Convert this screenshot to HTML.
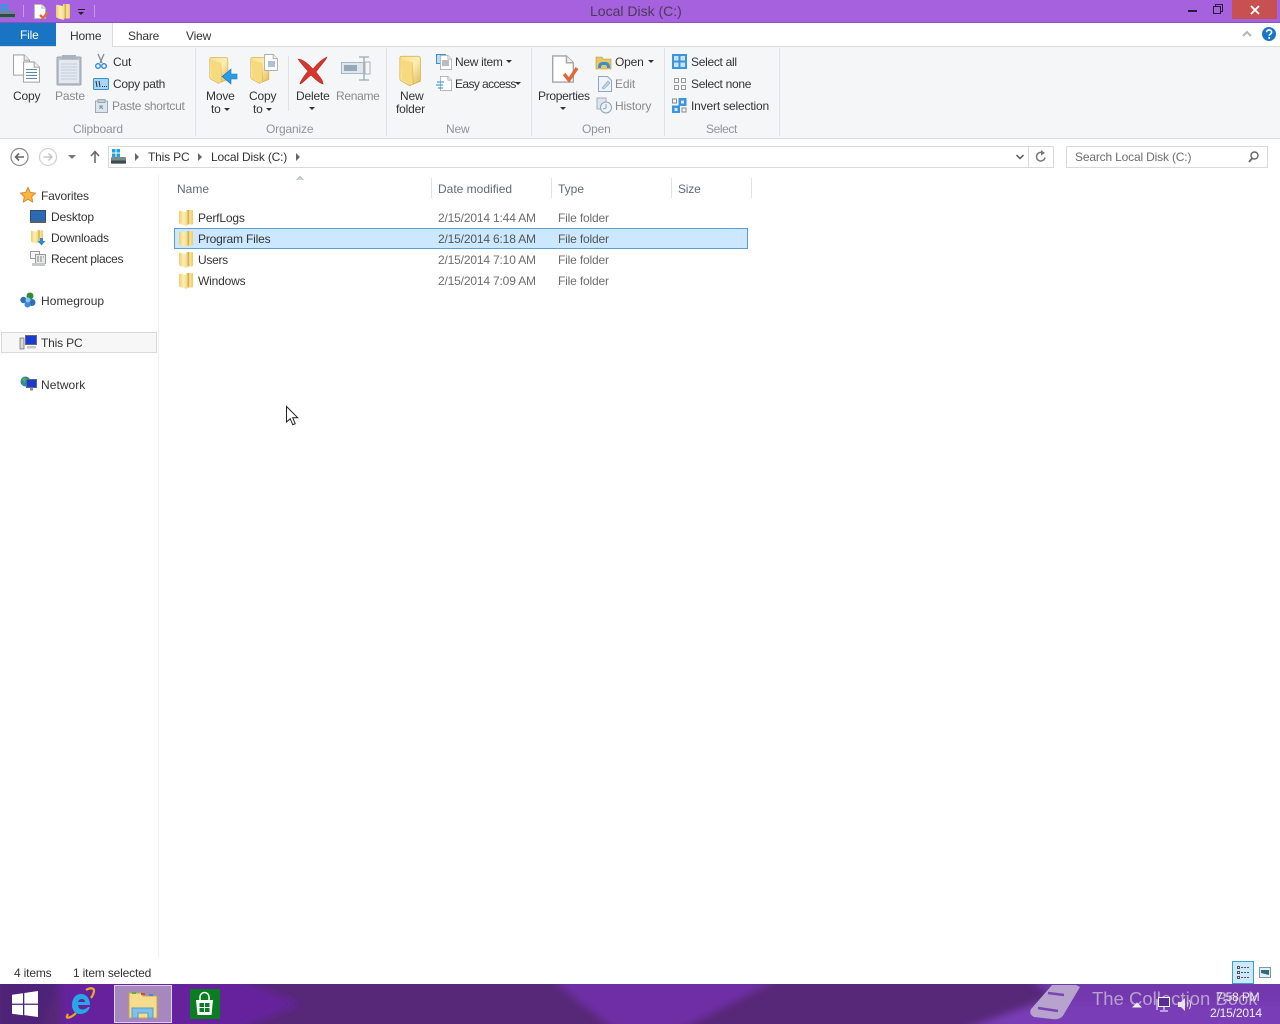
<!DOCTYPE html>
<html><head><meta charset="utf-8"><title>Local Disk (C:)</title>
<style>
html,body{margin:0;padding:0;width:1280px;height:1024px;overflow:hidden;background:#fff;font-family:"Liberation Sans",sans-serif;font-size:12px;color:#333}
.a{position:absolute;white-space:nowrap;line-height:14px;letter-spacing:-.17px}
.g{color:#8a8a8a}.l{color:#8f9499}.h{color:#5f6b78;letter-spacing:0}
svg{position:absolute;overflow:visible}
.ar{position:absolute;width:0;height:0;border:3px solid transparent;border-top:3px solid #333;border-bottom:0}
.sep{position:absolute;width:1px;background:#e0e2e5}
.pa{position:absolute;width:0;height:0;border:4px solid transparent;border-left:4px solid #666;border-right:0}
.d{color:#6d6d6d}
</style></head><body>
<svg width="0" height="0"><defs>
<linearGradient id="fg" x1="0" y1="0" x2="1" y2="0"><stop offset="0" stop-color="#f0cd6c"/><stop offset=".3" stop-color="#fbeeb4"/><stop offset=".55" stop-color="#f7dd8c"/><stop offset=".68" stop-color="#c9a54a"/><stop offset=".76" stop-color="#f8e59f"/><stop offset="1" stop-color="#edc868"/></linearGradient>
<linearGradient id="fb" x1="0" y1="0" x2="1" y2="1"><stop offset="0" stop-color="#f9e08d"/><stop offset=".5" stop-color="#fbeeb2"/><stop offset="1" stop-color="#e2b64e"/></linearGradient>
<symbol id="f" viewBox="0 0 14 16"><path d="M0 1.500Q0 .5 1 .8L7 2V.5Q7 0 8 0h5q1 0 1 1v12.500q0 1-1 1H8.500L8 15.500Q7 16 6 15.500L1 14Q0 13.500 0 12.500z" fill="url(#fg)"/></symbol>
<symbol id="bf" viewBox="0 0 28 34"><path d="M3 1h18q3 0 3 3v25l-10 4-2 1L3 29Q1 28 1 26V3q0-2 2-2z" fill="url(#fb)" stroke="#d3ab4b" stroke-width=".8"/><path d="M15 8l1 25" stroke="#d9b65a" stroke-width=".8" fill="none"/><path d="M2 4l13 4v25L3 28z" fill="#f7d97e"/></symbol>
<symbol id="doc" viewBox="0 0 16 20"><path d="M.5.5h10l5 5v14H.5z" fill="#fff" stroke="#a4a4a4"/><path d="M10.500.5v5h5" fill="#eee" stroke="#a4a4a4"/></symbol>
</defs></svg>

<!-- title bar -->
<div class="a" style="left:0;top:0;width:1280px;height:23px;background:#a661de"></div>
<div class="a" style="left:0;top:22px;width:1280px;height:1px;background:#8c50bd"></div>
<svg style="left:0;top:3px" width="16" height="16"><rect x="0" y="8" width="15" height="7" fill="#6f8790"/><rect x="0" y="11" width="15" height="3" fill="#38474f"/><rect x="1" y="1" width="3" height="3" fill="#1ea2e6"/><rect x="5" y="1" width="3" height="3" fill="#1ea2e6"/><rect x="1" y="5" width="3" height="3" fill="#1ea2e6"/><rect x="5" y="5" width="3" height="3" fill="#1ea2e6"/></svg>
<div class="a" style="left:23px;top:5px;width:1px;height:12px;background:#c79be8"></div>
<svg style="left:34px;top:4px" width="15" height="16"><use href="#doc" width="12" height="15"/><path d="M6 11l3 3 5-6" fill="none" stroke="#e0683a" stroke-width="2.400"/></svg>
<svg style="left:56px;top:4px" width="14" height="16"><use href="#f" width="14" height="16"/></svg>
<div class="a" style="left:78px;top:9px;width:7px;height:1px;background:#222"></div>
<div class="ar" style="left:78px;top:12px;border-width:3.500px 3.500px 0;border-top-color:#222"></div>
<div class="a" style="left:94px;top:5px;width:1px;height:12px;background:#c79be8"></div>
<div class="a" style="left:590px;top:3px;font-size:14px;line-height:17px;color:#4a3a5a;letter-spacing:0">Local Disk (C:)</div>
<div class="a" style="left:1188px;top:10px;width:9px;height:2px;background:#2b1b3a"></div>
<svg style="left:1213px;top:4px" width="11" height="11"><path d="M.5 2.500h7v7h-7z M2.500 2.500v-2h7v7h-2" fill="none" stroke="#2b1b3a"/></svg>
<div class="a" style="left:1232px;top:0;width:45px;height:19px;background:#c75050"></div>
<svg style="left:1250px;top:5px" width="10" height="10"><path d="M1 1l8 8M9 1l-8 8" stroke="#fff" stroke-width="1.800"/></svg>

<!-- tabs -->
<div class="a" style="left:0;top:23px;width:56px;height:23px;background:#1a74c4"></div>
<div class="a" style="left:20px;top:28px;color:#fff">File</div>
<div class="a" style="left:56px;top:23px;width:57px;height:24px;background:#f5f6f7;border-right:1px solid #dadbdc;box-sizing:border-box"></div>
<div class="a" style="left:70px;top:29px">Home</div>
<div class="a" style="left:128px;top:29px">Share</div>
<div class="a" style="left:186px;top:29px">View</div>
<svg style="left:1242px;top:30px" width="10" height="7"><path d="M1 6l4-4 4 4" fill="none" stroke="#b5b5b5" stroke-width="2"/></svg>
<svg style="left:1262px;top:27px" width="14" height="14"><circle cx="7" cy="7" r="7" fill="#1b75c4"/><path d="M4.600 5.200c0-3 5-3 5 0 0 2-2.400 2-2.400 3.600" fill="none" stroke="#fff" stroke-width="1.600"/><rect x="6.300" y="10" width="1.800" height="1.800" fill="#fff"/></svg>

<!-- ribbon -->
<div class="a" style="left:0;top:46px;width:1280px;height:93px;background:#f5f6f7;border-top:1px solid #dadbdc;border-bottom:1px solid #dadbdc;box-sizing:border-box"></div>
<div class="a" style="left:56px;top:46px;width:56px;height:2px;background:#f5f6f7"></div>
<div class="sep" style="left:195px;top:48px;height:88px"></div>
<div class="sep" style="left:386px;top:48px;height:88px"></div>
<div class="sep" style="left:531px;top:48px;height:88px"></div>
<div class="sep" style="left:664px;top:48px;height:88px"></div>
<div class="sep" style="left:779px;top:48px;height:88px"></div>
<div class="sep" style="left:288px;top:56px;height:55px"></div>

<!-- Clipboard -->
<svg style="left:13px;top:54px" width="28" height="32"><use href="#doc" width="17" height="22" x="0" y="0"/><use href="#doc" width="17" height="24" x="10" y="6"/><path d="M13 15.500h11M13 18.500h11M13 21.500h11M13 24.500h11" stroke="#5b86ad"/></svg>
<div class="a" style="left:13px;top:89px">Copy</div>
<svg style="left:56px;top:54px" width="26" height="32"><rect x="1" y="3" width="24" height="28" rx="1" fill="#b9bfcb" stroke="#9aa3b3"/><rect x="3" y="6" width="20" height="23" fill="#e4e8ef"/><path d="M5 10h16M5 13h16M5 16h16M5 19h16M5 22h16M5 25h16" stroke="#c5cedc"/><rect x="6" y="1" width="14" height="4" fill="#aab1bf"/></svg>
<div class="a g" style="left:55px;top:89px">Paste</div>
<svg style="left:95px;top:54px" width="12" height="16"><path d="M3 0l4 9M9 0L5 9" stroke="#7d8a96" stroke-width="1.300"/><circle cx="3" cy="12" r="2.300" fill="none" stroke="#2b8ad4" stroke-width="1.400"/><circle cx="9" cy="12" r="2.300" fill="none" stroke="#2b8ad4" stroke-width="1.400"/></svg>
<div class="a" style="left:113px;top:55px">Cut</div>
<svg style="left:93px;top:78px" width="16" height="12"><rect x=".5" y=".5" width="15" height="11" rx="1" fill="#a9d5f7" stroke="#3b8fd0"/><path d="M3 3l1 6M6 3l1 6" stroke="#234"/><path d="M9 8.500h1M11 8.500h1M13 8.500h1" stroke="#234"/></svg>
<div class="a" style="left:113px;top:77px;letter-spacing:-.3px">Copy path</div>
<svg style="left:95px;top:99px" width="13" height="14"><rect x=".5" y="2" width="12" height="11.500" fill="#dbe5ef" stroke="#9aaab8"/><rect x="3" y=".5" width="7" height="3" fill="#c5ccd4" stroke="#9aa"/><path d="M5 10V7h3M5 7l3 3" stroke="#7f8d9b" fill="none"/></svg>
<div class="a g" style="left:112px;top:99px;letter-spacing:-.3px">Paste shortcut</div>
<div class="a l" style="left:73px;top:122px">Clipboard</div>

<!-- Organize -->
<svg style="left:209px;top:53px" width="30" height="34"><use href="#bf" width="22" height="32" y="1"/><path d="M28 21h-6v-5l-9 7.500 9 7.500v-5h6z" fill="#2a9ce0" stroke="#1a78b4" stroke-width=".6"/></svg>
<div class="a" style="left:206px;top:89px">Move</div>
<div class="a" style="left:211px;top:102px">to</div><div class="ar" style="left:224px;top:108px"></div>
<svg style="left:250px;top:53px" width="30" height="34"><use href="#bf" width="22" height="32" y="1"/><use href="#doc" width="14" height="17" x="14" y="1"/><path d="M18 9h7M18 11h7M18 13h7" stroke="#5b86ad"/></svg>
<div class="a" style="left:249px;top:89px">Copy</div>
<div class="a" style="left:253px;top:102px">to</div><div class="ar" style="left:266px;top:108px"></div>
<svg style="left:297px;top:56px" width="32" height="29"><path d="M1 3c5 0 11 6 15 10 4-5 9-10 14-12 0 2-7 9-11 15 3 4 7 8 7 12-4-1-9-6-12-9-4 3-8 8-11 9 0-3 5-9 8-13C7 11 3 6 1 3z" fill="#d8362c" stroke="#a8322c" stroke-width=".6"/></svg>
<div class="a" style="left:296px;top:89px">Delete</div>
<div class="ar" style="left:309px;top:107px"></div>
<svg style="left:341px;top:56px" width="31" height="26"><rect x=".5" y="6.500" width="22" height="11" fill="#dfe6ee" stroke="#a9b6c3"/><rect x="3" y="9" width="13" height="6" fill="#98a8bb"/><path d="M18 1h10M18 24h10M23 1v23" stroke="#a9b3bd" stroke-width="1.600"/><rect x="24" y="6" width="5" height="12" fill="none" stroke="#a9b3bd"/></svg>
<div class="a g" style="left:336px;top:89px;letter-spacing:-.3px">Rename</div>
<div class="a l" style="left:266px;top:122px">Organize</div>

<!-- New -->
<svg style="left:399px;top:53px" width="26" height="34"><use href="#bf" width="25" height="33" y="1"/></svg>
<div class="a" style="left:400px;top:89px">New</div>
<div class="a" style="left:396px;top:102px">folder</div>
<svg style="left:436px;top:54px" width="16" height="16"><rect x=".5" y=".5" width="9" height="9" fill="#bcdcf5" stroke="#3b8fd0"/><use href="#doc" width="12" height="15" x="4" y="1"/><path d="M6 7h7M6 9h7M6 11h7" stroke="#778"/></svg>
<div class="a" style="left:455px;top:55px;letter-spacing:-.3px">New item</div><div class="ar" style="left:506px;top:60px"></div>
<svg style="left:436px;top:76px" width="16" height="16"><use href="#doc" width="12" height="15" x="4" y="0"/><path d="M1 6h7M0 9h7M2 12h5" stroke="#2b8ad4"/></svg>
<div class="a" style="left:455px;top:77px;letter-spacing:-.6px">Easy access</div><div class="ar" style="left:515px;top:82px"></div>
<div class="a l" style="left:446px;top:122px">New</div>

<!-- Open -->
<svg style="left:552px;top:55px" width="28" height="31"><use href="#doc" width="22" height="28"/><path d="M12 19l5 6 8-12" fill="none" stroke="#e0683a" stroke-width="3.400"/></svg>
<div class="a" style="left:538px;top:89px;letter-spacing:-.3px">Properties</div>
<div class="ar" style="left:560px;top:107px"></div>
<svg style="left:596px;top:55px" width="16" height="15"><path d="M0 2h6l1 2h8v10H0z" fill="#e8c766" stroke="#b9963f" stroke-width=".6"/><path d="M2 13c0-5 2-6 6-6s6 1 6 6h-3c0-3-1-3-3-3s-3 0-3 3z" fill="#3a8ecc"/></svg>
<div class="a" style="left:615px;top:55px">Open</div><div class="ar" style="left:648px;top:60px"></div>
<svg style="left:598px;top:76px" width="14" height="16"><path d="M.5.500h9l4 4v11H.5z" fill="#eef3f8" stroke="#8fa9c4"/><path d="M4 12l6-7 2 2-6 6z" fill="#c5d2df" stroke="#8fa9c4" stroke-width=".6"/></svg>
<div class="a g" style="left:615px;top:77px">Edit</div>
<svg style="left:596px;top:98px" width="17" height="16"><rect x="1" y="0" width="9" height="11" fill="#dde5ee" stroke="#aab"/><circle cx="10" cy="9.500" r="5.500" fill="#eef3f8" stroke="#8fa3b8"/><path d="M10 6v4l-3 1" fill="none" stroke="#8fa3b8"/></svg>
<div class="a g" style="left:615px;top:99px">History</div>
<div class="a l" style="left:582px;top:122px">Open</div>

<!-- Select -->
<svg style="left:672px;top:54px" width="15" height="15"><rect width="15" height="15" fill="#3a95dc"/><rect x="2" y="2" width="4.500" height="4.500" fill="#c9e2f6"/><rect x="8.500" y="2" width="4.500" height="4.500" fill="#c9e2f6"/><rect x="2" y="8.500" width="4.500" height="4.500" fill="#c9e2f6"/><rect x="8.500" y="8.500" width="4.500" height="4.500" fill="#c9e2f6"/></svg>
<div class="a" style="left:691px;top:55px;letter-spacing:-.3px">Select all</div>
<svg style="left:674px;top:78px" width="12" height="12"><path d="M.5.500h4v4h-4zM7.500.500h4v4h-4zM.5 7.500h4v4h-4zM7.500 7.500h4v4h-4z" fill="none" stroke="#9a9a9a"/></svg>
<div class="a" style="left:691px;top:77px;letter-spacing:-.3px">Select none</div>
<svg style="left:672px;top:98px" width="15" height="15"><rect x="0.500" y="1" width="4" height="4" fill="none" stroke="#888"/><rect x="6.500" y="0" width="8" height="8" fill="#3a95dc"/><rect x="9" y="2.500" width="3" height="3" fill="#d6eafa"/><rect x="0" y="7.500" width="8" height="7.500" fill="#3a95dc"/><rect x="2.500" y="10" width="3" height="3" fill="#d6eafa"/><rect x="10" y="10" width="4" height="4" fill="none" stroke="#888"/></svg>
<div class="a" style="left:691px;top:99px">Invert selection</div>
<div class="a l" style="left:706px;top:122px;letter-spacing:-.4px">Select</div>

<!-- nav bar -->
<svg style="left:10px;top:148px" width="20" height="18"><circle cx="9.500" cy="9" r="8.500" fill="#fff" stroke="#8a8a8a" stroke-width="1.200"/><path d="M14 9H6M9 5.500L5.500 9 9 12.500" fill="none" stroke="#666" stroke-width="1.600"/></svg>
<svg style="left:39px;top:148px" width="20" height="18"><circle cx="9" cy="9" r="8.500" fill="#fff" stroke="#d0d0d0" stroke-width="1.200"/><path d="M4.500 9h8M9.500 5.500L13 9l-3.500 3.500" fill="none" stroke="#c8c8c8" stroke-width="1.600"/></svg>
<div class="ar" style="left:68px;top:155px;border-width:4px 4px 0;border-top-color:#777"></div>
<svg style="left:90px;top:150px" width="10" height="13"><path d="M5 13V2M1 6l4-4.500L9 6" fill="none" stroke="#666" stroke-width="1.500"/></svg>
<div class="a" style="left:108px;top:146px;width:946px;height:22px;border:1px solid #d9d9d9;box-sizing:border-box;background:#fff"></div>
<div class="a" style="left:1028px;top:147px;width:1px;height:20px;background:#d9d9d9"></div>
<svg style="left:111px;top:149px" width="17" height="16"><rect x="0" y="8" width="15" height="7" rx="1" fill="#7b8d86"/><rect x="0" y="11.500" width="15" height="2.500" fill="#3d4b50"/><rect x="1" y="0" width="3.500" height="3.500" fill="#1ea2e6"/><rect x="5.500" y="0" width="3.500" height="3.500" fill="#1ea2e6"/><rect x="1" y="4.500" width="3.500" height="3.500" fill="#1ea2e6"/><rect x="5.500" y="4.500" width="3.500" height="3.500" fill="#1ea2e6"/></svg>
<div class="pa" style="left:135px;top:153px"></div>
<div class="a" style="left:148px;top:150px">This PC</div>
<div class="pa" style="left:198px;top:153px"></div>
<div class="a" style="left:211px;top:150px">Local Disk (C:)</div>
<div class="pa" style="left:296px;top:153px"></div>
<svg style="left:1016px;top:154px" width="8" height="6"><path d="M.5 1L4 4.500 7.500 1" fill="none" stroke="#555" stroke-width="1.500"/></svg>
<svg style="left:1035px;top:150px" width="12" height="13"><path d="M10 7.500a4.300 4.300 0 1 1-2-4.500" fill="none" stroke="#777" stroke-width="1.500"/><path d="M6 0l4 3-4 2.500z" fill="#777"/></svg>
<div class="a" style="left:1066px;top:146px;width:202px;height:22px;border:1px solid #d9d9d9;box-sizing:border-box;background:#fff"></div>
<div class="a" style="left:1075px;top:150px;color:#6d6d6d">Search Local Disk (C:)</div>
<svg style="left:1248px;top:151px" width="11" height="12"><circle cx="6.500" cy="4.500" r="3.500" fill="none" stroke="#666" stroke-width="1.400"/><path d="M4 7.500L1 11" stroke="#666" stroke-width="1.800"/></svg>

<!-- Nav pane -->
<div class="a" style="left:158px;top:175px;width:1px;height:782px;background:#f0f0f0"></div>
<svg style="left:20px;top:187px" width="16" height="16"><path d="M8 .5l2.300 5 5.200.6-3.800 3.600 1 5.300L8 12.400 3.300 15l1-5.300L.5 6.100l5.200-.6z" fill="#f6b73c" stroke="#d87f2a" stroke-width=".9"/></svg>
<div class="a" style="left:41px;top:189px">Favorites</div>
<svg style="left:30px;top:210px" width="16" height="13"><rect x=".5" y=".5" width="15" height="11" fill="#2a69b4" stroke="#3a4a5a"/><rect x="0" y="11" width="16" height="2" fill="#56606a"/></svg>
<div class="a" style="left:51px;top:210px">Desktop</div>
<svg style="left:31px;top:229px" width="15" height="17"><use href="#f" width="12" height="16"/><path d="M9 9h3v3h2.500l-4 4.500-4-4.500H9z" fill="#2a8ad4"/></svg>
<div class="a" style="left:51px;top:231px">Downloads</div>
<svg style="left:30px;top:251px" width="16" height="15"><rect x=".5" y=".5" width="9" height="7" fill="#f4f4f4" stroke="#999"/><rect x="5.500" y="3.500" width="10" height="9" fill="#e6e9ec" stroke="#999"/><path d="M7 6h2M10 6h2M13 6h1M7 8h2M10 8h2M7 10h2M10 10h2" stroke="#888"/><rect x="2" y="12" width="13" height="3" fill="#c8c8c8"/></svg>
<div class="a" style="left:51px;top:252px;letter-spacing:-.3px">Recent places</div>
<svg style="left:20px;top:292px" width="16" height="16"><circle cx="10" cy="4" r="3.500" fill="#2f8a3d"/><circle cx="3.500" cy="8" r="3.200" fill="#2f6fb8"/><circle cx="12" cy="10.500" r="3.500" fill="#2f6fb8"/><circle cx="7.500" cy="12.500" r="3" fill="#3b8ad4"/><circle cx="8" cy="8" r="2.500" fill="#8cc4ee"/></svg>
<div class="a" style="left:41px;top:294px;letter-spacing:.05px">Homegroup</div>
<div class="a" style="left:1px;top:332px;width:156px;height:21px;background:#f7f7f7;border:1px solid #d9d9d9;box-sizing:border-box"></div>
<svg style="left:20px;top:335px" width="17" height="15"><rect x="5.500" y=".5" width="11" height="9" fill="#1a3bd0" stroke="#667"/><rect x="0" y="3" width="4" height="11" fill="#d8d8d8" stroke="#555" stroke-width=".6"/><rect x="7" y="11" width="9" height="2.500" fill="#c8c8c8"/></svg>
<div class="a" style="left:41px;top:336px">This PC</div>
<svg style="left:20px;top:376px" width="17" height="16"><circle cx="5.500" cy="5.500" r="5" fill="#2a8c9a"/><path d="M2 3c2-2 4-1 5 0L4 7z" fill="#4eb04e"/><rect x="6.500" y="3.500" width="10" height="8" fill="#1a3bd0" stroke="#667"/><rect x="10" y="11.500" width="3" height="3" fill="#888"/></svg>
<div class="a" style="left:41px;top:378px;letter-spacing:.05px">Network</div>

<!-- list -->
<svg style="left:296px;top:176px" width="8" height="5"><path d="M.5 4L4 .5 7.500 4" fill="#cfd8e0" stroke="#9fb0bf" stroke-width=".8"/></svg>
<div class="a h" style="left:177px;top:182px">Name</div>
<div class="a h" style="left:438px;top:182px">Date modified</div>
<div class="a h" style="left:558px;top:182px">Type</div>
<div class="a h" style="left:678px;top:182px;letter-spacing:-.2px">Size</div>
<div class="sep" style="left:431px;top:178px;height:20px"></div>
<div class="sep" style="left:551px;top:178px;height:20px"></div>
<div class="sep" style="left:671px;top:178px;height:20px"></div>
<div class="sep" style="left:751px;top:178px;height:20px"></div>
<div class="a" style="left:174px;top:228px;width:574px;height:21px;background:#cce8ff;border:1px solid #5a9fd6;box-sizing:border-box"></div>

<svg style="left:179px;top:210px" width="14" height="16"><use href="#f" width="14" height="16"/></svg>
<div class="a" style="left:198px;top:211px">PerfLogs</div>
<div class="a d" style="left:438px;top:211px">2/15/2014 1:44 AM</div>
<div class="a d" style="left:558px;top:211px">File folder</div>
<svg style="left:179px;top:231px" width="14" height="16"><use href="#f" width="14" height="16"/></svg>
<div class="a" style="left:198px;top:232px">Program Files</div>
<div class="a" style="left:438px;top:232px;color:#555">2/15/2014 6:18 AM</div>
<div class="a" style="left:558px;top:232px;color:#555">File folder</div>
<svg style="left:179px;top:252px" width="14" height="16"><use href="#f" width="14" height="16"/></svg>
<div class="a" style="left:198px;top:253px;letter-spacing:-.3px">Users</div>
<div class="a d" style="left:438px;top:253px">2/15/2014 7:10 AM</div>
<div class="a d" style="left:558px;top:253px">File folder</div>
<svg style="left:179px;top:273px" width="14" height="16"><use href="#f" width="14" height="16"/></svg>
<div class="a" style="left:198px;top:274px">Windows</div>
<div class="a d" style="left:438px;top:274px">2/15/2014 7:09 AM</div>
<div class="a d" style="left:558px;top:274px">File folder</div>

<!-- cursor -->
<svg style="left:286px;top:406px" width="13" height="20"><path d="M.5.500v15.500l3.700-3.300 2.500 6 2.500-1-2.500-6h5z" fill="#fff" stroke="#222"/></svg>

<!-- status -->
<div class="a" style="left:14px;top:966px">4 items</div>
<div class="a" style="left:73px;top:966px">1 item selected</div>
<div class="a" style="left:1232px;top:961px;width:22px;height:23px;background:#cce8ff;border:1px solid #3aa0c8;box-sizing:border-box"></div>
<svg style="left:1237px;top:966px" width="13" height="13"><path d="M.5.500h2v2h-2zM.5 5.500h2v2h-2zM.5 10.500h2v2h-2z" fill="none" stroke="#555"/><path d="M4 1.500h9M4 6.500h9M4 11.500h9" stroke="#555" stroke-dasharray="2 1"/></svg>
<svg style="left:1259px;top:967px" width="12" height="11"><rect x=".5" y=".5" width="11" height="10" fill="#dfeff5" stroke="#7f97a3"/><path d="M2 3h8v5L2 6z" fill="#2f6a7c"/></svg>

<!-- taskbar -->
<div class="a" style="left:0;top:984px;width:1280px;height:40px;background:#572878;overflow:hidden">
<svg style="left:0;top:0;overflow:hidden" width="1280" height="40">
<defs><filter id="bl" x="-10%" y="-50%" width="120%" height="200%"><feGaussianBlur stdDeviation="4"/></filter></defs>
<g filter="url(#bl)">
<path d="M0-6H60L40 46H0z" fill="#4d2178"/>
<path d="M60-6H240L300 20 240 46H60z" fill="#66249c"/>
<path d="M550-6H780L680 46H615z" fill="#6f2ea6"/>
<path d="M960 46L1040 18 1290 0V46z" fill="#7a3eb8"/>
<path d="M1030-6H1290V20H1060z" fill="#7338ae"/>
</g></svg>
</div>
<svg style="left:12px;top:991px" width="26" height="26"><path d="M0 3.700l11-1.500v10.400H0zM12.300 2l13.700-2v12.600H12.300zM0 13.900h11v10.300L0 22.700zM12.300 13.900H26V26l-13.700-1.900z" fill="#fff"/></svg>
<svg style="left:65px;top:987px" width="32" height="33"><path d="M3 27C-1 33 6 31 11 26M21 3c3-2 8-3 8 1 0 2-1 4-3 7" fill="none" stroke="#eca82b" stroke-width="2.200"/><path d="M7 18c0-7 4-11 9-11s9 4 9 11H13c0 5 6 6 10 2h2c-2 6-7 7-10 7-5 0-8-4-8-9zm6-3h7c0-4-6-4-7 0z" fill="#27a6e8" fill-rule="evenodd"/></svg>
<div class="a" style="left:114px;top:985px;width:58px;height:38px;background:#a788bd;border:1px solid #ddd0e6;box-sizing:border-box"></div>
<svg style="left:128px;top:991px" width="30" height="28"><path d="M1 2h12l2 3h14v22H1z" fill="#f6dd8d" stroke="#c8a44d"/><rect x="4" y="1" width="4" height="2" fill="#4fb04f"/><rect x="13" y="2" width="4" height="2" fill="#d04a3a"/><rect x="21" y="3" width="4" height="2" fill="#3a90d0"/><path d="M4 27V17h21v10h-5v-5H10v5z" fill="#7fc0ec" stroke="#5a9cc8"/></svg>
<svg style="left:190px;top:989px" width="30" height="30"><rect width="30" height="30" fill="#0a7d20"/><path d="M6 11h17l-1.500 15H7.500z" fill="#fff"/><path d="M10 11V8a4.500 4.500 0 0 1 9 0v3" fill="none" stroke="#fff" stroke-width="1.500"/><path d="M9.500 14h4.500v4H9.500zM15 14h4.500v4H15zM9.500 19h4.500v4H9.500zM15 19h4.500v4H15z" fill="#0a7d20"/></svg>

<!-- watermark -->
<svg style="left:1030px;top:984px" width="52" height="38"><path d="M22 1L46 1 50 3 34 30c-2 4-6 6-12 5L4 33c-4-2-5-6-2-9z" fill="#b7a3cd"/><path d="M8 24l20 3M18 9l16 2" stroke="#7a44b4" stroke-width="2.500"/></svg>
<div class="a" style="left:1092px;top:986px;font-size:18.500px;line-height:26px;color:#b7a3cd;letter-spacing:0">The Collection Book</div>
<svg style="left:1131px;top:1002px" width="12" height="6"><path d="M1 5.500L6 .5l5 5z" fill="#eee"/></svg>
<svg style="left:1155px;top:997px" width="15" height="16"><rect x="3.500" y=".5" width="11" height="9" fill="#5a2d96" stroke="#fff"/><path d="M9 10v3M5 14h8M2 2v11" stroke="#fff"/></svg>
<svg style="left:1178px;top:998px" width="16" height="13"><path d="M0 4h3l4-4v13L3 9H0z" fill="#e8e4ee"/><path d="M9 4c1 1 1 4 0 5M11 2c2 2 2 7 0 9" fill="none" stroke="#ddd"/></svg>
<div class="a" style="left:1216px;top:990px;color:#eee">7:58 PM</div>
<div class="a" style="left:1210px;top:1006px;color:#f0f0f0">2/15/2014</div>
</body></html>
